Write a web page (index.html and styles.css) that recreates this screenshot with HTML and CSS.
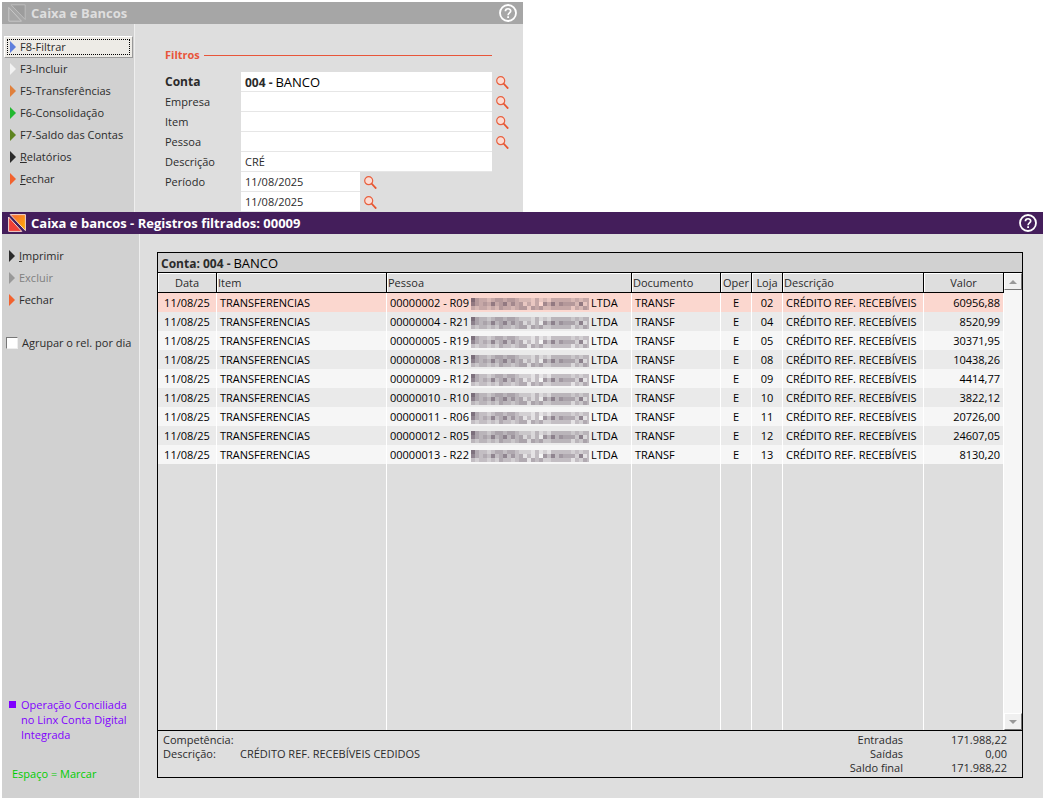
FILE: index.html
```
<!DOCTYPE html>
<html lang="pt-BR">
<head>
  <meta charset="UTF-8" />
  <meta name="viewport" content="width=device-width, initial-scale=1" />
  <title>Caixa e Bancos</title>
  <link rel="stylesheet" href="styles.css">
</head>
<body>
  <svg width="0" height="0" class="sprites" aria-hidden="true">
    <symbol id="lupa" viewBox="0 0 13 13">
      <circle cx="4.7" cy="4.7" r="4" fill="#fbdcd4" stroke="#e8603f" stroke-width="1.2" />
      <path d="M7.5 7.5L12.2 12.6" stroke="#e8552f" stroke-width="1.8" fill="none" />
    </symbol>
    <symbol id="ajuda" viewBox="0 0 18 18">
      <circle cx="9" cy="9" r="8" fill="none" stroke="#fff" stroke-width="1.8" />
      <path d="M6.4 7.3C6.4 3.9 11.7 4 11.7 7.1C11.7 8.9 9.1 9 9.1 11.2" fill="none" stroke="#fff" stroke-width="1.7" />
      <path d="M9.1 12.3v1.8" stroke="#fff" stroke-width="1.8" />
    </symbol>
    <symbol id="borrado" viewBox="0 0 118 12"></symbol>
  </svg>

  <section class="window filter-window">
    <header class="title-bar inactive">
      <svg class="logo" viewBox="0 0 18 18" fill="none" stroke="#c8c8c8">
        <path d="M3 .8H17.2V15.5Z" fill="#9c9c9c" stroke="#bdbdbd" />
        <path d="M.8 3.5V17.2H13.5Z" />
      </svg>
      <h1>Caixa e Bancos</h1>
      <button class="help" aria-label="Ajuda"><svg><use href="#ajuda" /></svg></button>
    </header>
    <div class="window-body">
      <nav class="menu">
        <button class="item selected blue">F8-Filtrar</button>
        <button class="item white">F3-Incluir</button>
        <button class="item orange">F5-Transferências</button>
        <button class="item green">F6-Consolidação</button>
        <button class="item olive">F7-Saldo das Contas</button>
        <button class="item black"><u>R</u>elatórios</button>
        <button class="item red"><u>F</u>echar</button>
      </nav>
      <form class="filters">
        <h2>Filtros</h2>
        <div class="field">
          <label for="conta"><b>Conta</b></label>
          <div class="account" id="conta" role="textbox" tabindex="0"><b>004 -</b> <span>BANCO</span></div>
          <button type="button" class="search" aria-label="Buscar conta"><svg><use href="#lupa" /></svg></button>
        </div>
        <div class="field">
          <label for="empresa">Empresa</label>
          <input type="text" id="empresa" />
          <button type="button" class="search" aria-label="Buscar empresa"><svg><use href="#lupa" /></svg></button>
        </div>
        <div class="field">
          <label for="item">Item</label>
          <input type="text" id="item" />
          <button type="button" class="search" aria-label="Buscar item"><svg><use href="#lupa" /></svg></button>
        </div>
        <div class="field">
          <label for="pessoa">Pessoa</label>
          <input type="text" id="pessoa" />
          <button type="button" class="search" aria-label="Buscar pessoa"><svg><use href="#lupa" /></svg></button>
        </div>
        <div class="field">
          <label for="descricao">Descrição</label>
          <input type="text" id="descricao" value="CRÉ" />
        </div>
        <div class="field date">
          <label for="inicio">Período</label>
          <input type="text" id="inicio" value="11/08/2025" />
          <button type="button" class="search" aria-label="Data inicial"><svg><use href="#lupa" /></svg></button>
        </div>
        <div class="field date">
          <label for="fim" aria-label="Data final"></label>
          <input type="text" id="fim" value="11/08/2025" />
          <button type="button" class="search" aria-label="Data final"><svg><use href="#lupa" /></svg></button>
        </div>
      </form>
    </div>
  </section>

  <section class="window records-window">
    <header class="title-bar">
      <svg class="logo" viewBox="0 0 18 18">
        <defs>
          <linearGradient id="g1" x1="0" y1="0" x2="1" y2="1">
            <stop offset="0" stop-color="#f7643a" />
            <stop offset="1" stop-color="#ffb400" />
          </linearGradient>
        </defs>
        <path d="M2.2 .6H17.4V16.6Z" fill="url(#g1)" stroke="#ffe9dc" stroke-width=".9" />
        <path d="M.6 3V17.4H13.8Z" fill="#ee4036" stroke="#ffe9dc" stroke-width=".9" />
      </svg>
      <h1>Caixa e bancos - Registros filtrados: 00009</h1>
      <button class="help" aria-label="Ajuda"><svg><use href="#ajuda" /></svg></button>
    </header>
    <div class="window-body">
      <aside class="menu">
        <button class="item black"><u>I</u>mprimir</button>
        <button class="item gray" disabled>Excluir</button>
        <button class="item red">Fechar</button>
        <label class="group-day"><input type="checkbox" /> Agrupar o rel. por dia</label>
        <p class="legend">Operação Conciliada<br>no Linx Conta Digital<br>Integrada</p>
        <p class="hint">Espaço = Marcar</p>
      </aside>
      <main class="grid-area">
        <div class="grid">
          <div class="grid-title"><b>Conta: 004 -</b> <span>BANCO</span></div>
          <div class="grid-body">
            <table>
              <colgroup>
                <col class="c-data"><col class="c-item"><col><col class="c-doc">
                <col class="c-oper"><col class="c-loja"><col class="c-desc"><col class="c-valor">
              </colgroup>
              <thead>
                <tr>
                  <th class="center">Data</th><th>Item</th><th>Pessoa</th><th>Documento</th>
                  <th class="center">Oper</th><th class="center">Loja</th><th>Descrição</th><th class="center">Valor</th>
                </tr>
              </thead>
              <tbody id="rows"></tbody>
            </table>
            <div class="scrollbar">
              <button class="up" aria-label="Subir"></button>
              <button class="down" aria-label="Descer"></button>
            </div>
          </div>
          <footer class="summary">
            <dl class="details">
              <dt>Competência:</dt><dd></dd>
              <dt>Descrição:</dt><dd>CRÉDITO REF. RECEBÍVEIS CEDIDOS</dd>
            </dl>
            <dl class="totals">
              <dt>Entradas</dt><dd>171.988,22</dd>
              <dt>Saídas</dt><dd>0,00</dd>
              <dt>Saldo final</dt><dd>171.988,22</dd>
            </dl>
          </footer>
        </div>
      </main>
    </div>
  </section>

  <script src="script.js"></script>
</body>
</html>
```

FILE: styles.css
```
* {
  box-sizing: border-box;
}

body {
  margin: 0;
  padding: 2px 2px 1px;
  min-height: 100vh;
  display: flex;
  flex-direction: column;
  background: #fff;
  color: #2b2b2b;
  font-family: "Open Sans", "Noto Sans", sans-serif;
  font-size: 11px;
  line-height: 16px;
}

h1, h2, p, dl, dd {
  margin: 0;
}

button, input {
  font: inherit;
  color: inherit;
  border: none;
  border-radius: 0;
  padding: 0;
  background: none;
}

.sprites {
  position: absolute;
}

.window {
  display: flex;
  flex-direction: column;
  background: #dedede;
}

.filter-window {
  width: 50%;
}

.records-window {
  flex: 1;
}

.title-bar {
  height: 22px;
  display: flex;
  align-items: center;
  gap: 5px;
  padding: 0 6px;
  background: #441e5b;
  color: #fff;
}

.title-bar.inactive {
  background: #a6a6a6;
  color: #dedede;
}

.title-bar h1 {
  flex: 1;
  font-size: 13px;
  line-height: 20px;
  font-weight: bold;
}

.logo {
  width: 18px;
  height: 18px;
}

.help svg {
  display: block;
  width: 18px;
  height: 18px;
}

.window-body {
  flex: 1;
  display: flex;
}

/* side menu */
.menu {
  flex: none;
  display: flex;
  flex-direction: column;
  width: 133px;
  padding: 12px 1px 0 2px;
  background: #d1d1d1;
  border-right: 1px solid #eee;
}

.records-window .menu {
  width: 138px;
  padding: 11px 0 16px 1px;
}

.item {
  display: flex;
  align-items: center;
  height: 22px;
  padding-left: 6px;
  white-space: nowrap;
  text-align: left;
}

.item::before {
  content: "";
  margin-right: 4px;
  border: 6px solid transparent;
  border-left-color: currentColor;
  border-right: none;
}

.item.selected {
  background: #edebe6;
  border: 1px solid #fff;
  border-right-color: #999;
  border-bottom-color: #999;
  outline: 1px dotted #000;
  outline-offset: -4px;
  padding-left: 5px;
}

.blue::before { border-left-color: #5f7fdc; }
.white::before { border-left-color: #f2f2f2; }
.orange::before { border-left-color: #e0803c; }
.green::before { border-left-color: #22b830; }
.olive::before { border-left-color: #5e8420; }
.black::before { border-left-color: #2b2b2b; }
.red::before { border-left-color: #f2622e; }
.gray { color: #808080; }
.gray::before { border-left-color: #999; }

.group-day {
  display: flex;
  align-items: center;
  gap: 4px;
  margin: 24px 0 0 3px;
  white-space: nowrap;
}

.group-day input {
  appearance: none;
  flex: none;
  width: 12px;
  height: 12px;
  margin: 0;
  background: #fff;
  border: 1px solid #777;
  border-right-color: #eee;
  border-bottom-color: #eee;
}

.legend {
  position: relative;
  margin-top: auto;
  padding-left: 18px;
  line-height: 15px;
  white-space: nowrap;
  color: #8000ff;
}

.legend::before {
  content: "";
  position: absolute;
  left: 6px;
  top: 4px;
  width: 7px;
  height: 7px;
  background: #8000ff;
}

.hint {
  margin: 24px 0 0 9px;
  color: #00cc00;
}

/* filter form */
.filters {
  flex: 1;
  padding: 23px 7px 0 30px;
}

.filters h2 {
  display: flex;
  align-items: center;
  gap: 4px;
  margin: 0 24px 9px 0;
  font-size: 11px;
  line-height: 16px;
  color: #e8553a;
}

.filters h2::after {
  content: "";
  flex: 1;
  height: 1px;
  background: #e8553a;
}

.field {
  display: flex;
  align-items: center;
  height: 20px;
}

.field label {
  width: 76px;
}

.field b,
.grid-title b {
  font-size: 12px;
}

.field input,
.account {
  flex: 1;
  min-width: 0;
  height: 20px;
  padding: 0 4px;
  background: #fff;
  border-bottom: 1px solid #e6e6e6;
  line-height: 20px;
}

.account span,
.grid-title span {
  font-size: 13px;
  color: #000;
}

.field.date input {
  flex: none;
  width: 119px;
}

.search {
  width: 24px;
  height: 18px;
  padding-left: 4px;
}

.search svg {
  display: block;
  width: 13px;
  height: 13px;
}

.field > :nth-child(2):last-child {
  margin-right: 24px;
}

/* records grid */
.grid-area {
  flex: 1;
  min-width: 0;
  display: flex;
  padding: 18px 20px 20px 17px;
}

.grid {
  flex: 1;
  min-width: 0;
  display: flex;
  flex-direction: column;
  border: 1px solid #000;
}

.grid-title {
  height: 20px;
  padding: 0 3px;
  line-height: 20px;
  background: #d1d1d1;
  border-bottom: 1px solid #000;
}

.grid-body {
  flex: 1;
  display: flex;
}

table {
  flex: 1;
  width: 100%;
  min-width: 0;
  table-layout: fixed;
  border-collapse: separate;
  border-spacing: 0;
}

.c-data { width: 59px; }
.c-item { width: 170px; }
.c-doc { width: 89px; }
.c-oper { width: 31px; }
.c-loja { width: 31px; }
.c-desc { width: 141px; }
.c-valor { width: 80px; }

th {
  height: 20px;
  padding: 0 1px;
  font-weight: normal;
  text-align: left;
  border: solid #000;
  border-width: 0 1px 1px 0;
  box-shadow: inset 1px 1px #fff;
}

td {
  height: 19px;
  padding: 0 3px;
  color: #000;
  white-space: nowrap;
  border-right: 1px solid #fff;
}

tbody tr:nth-child(odd) { background: #f6f6f6; }
tbody tr:nth-child(even) { background: #eaeaea; }
tbody tr:first-child { background: #fbd7cf; }
tbody tr.filler { background: none; }
tr.filler td { height: auto; }

.center {
  padding: 0;
  text-align: center;
}

.right { text-align: right; }

td svg {
  width: 118px;
  height: 12px;
  margin: 0 2px;
  vertical-align: middle;
}

.scrollbar {
  flex: none;
  width: 18px;
  display: flex;
  flex-direction: column;
  justify-content: space-between;
  background: #f6f6f6;
}

.scrollbar button {
  display: grid;
  place-items: center;
  height: 17px;
  background: #f0f0f0;
  border: 1px solid #fff;
  border-right-color: #777;
  border-bottom-color: #777;
}

.scrollbar button::before {
  content: "";
  border: 4px solid transparent;
}

.scrollbar .up::before {
  border-top: none;
  border-bottom-color: #999;
}

.scrollbar .down::before {
  border-bottom: none;
  border-top-color: #999;
}

.summary {
  display: flex;
  justify-content: space-between;
  height: 47px;
  padding: 2px 15px 0 5px;
  border-top: 1px solid #000;
  line-height: 14px;
}

.details {
  display: grid;
  grid-template-columns: 77px auto;
  grid-auto-rows: 14px;
}

.totals {
  display: grid;
  grid-template-columns: auto 104px;
  grid-auto-rows: 14px;
  text-align: right;
}
```

FILE: script.js
```
const records = [
  ['00000002 - R09', '02', '60956,88'],
  ['00000004 - R21', '04', '8520,99'],
  ['00000005 - R19', '05', '30371,95'],
  ['00000008 - R13', '08', '10438,26'],
  ['00000009 - R12', '09', '4414,77'],
  ['00000010 - R10', '10', '3822,12'],
  ['00000011 - R06', '11', '20726,00'],
  ['00000012 - R05', '12', '24607,05'],
  ['00000013 - R22', '13', '8130,20']
];

// darkness of each 4px cell that hides the name
const cells = [
  '743323443443222131213333323233',
  '643436346353413130536354442613',
  '323323243323441434223333313243'
];

let rects = '';
cells.forEach((line, y) => {
  [...line].forEach((level, x) => {
    rects += `<rect x="${x * 4}" y="${y * 4}" width="4" height="4" fill="#4c3a4c" opacity="${level / 10}" />`;
  });
});
document.getElementById('borrado').innerHTML = rects;

const body = records.map(([code, store, value]) => `
  <tr>
    <td class="center">11/08/25</td>
    <td>TRANSFERENCIAS</td>
    <td>${code}<svg aria-hidden="true"><use href="#borrado" /></svg>LTDA</td>
    <td>TRANSF</td>
    <td class="center">E</td>
    <td class="center">${store}</td>
    <td>CRÉDITO REF. RECEBÍVEIS</td>
    <td class="right">${value}</td>
  </tr>`).join('');

document.getElementById('rows').innerHTML = body + '<tr class="filler">' + '<td></td>'.repeat(8) + '</tr>';
```
